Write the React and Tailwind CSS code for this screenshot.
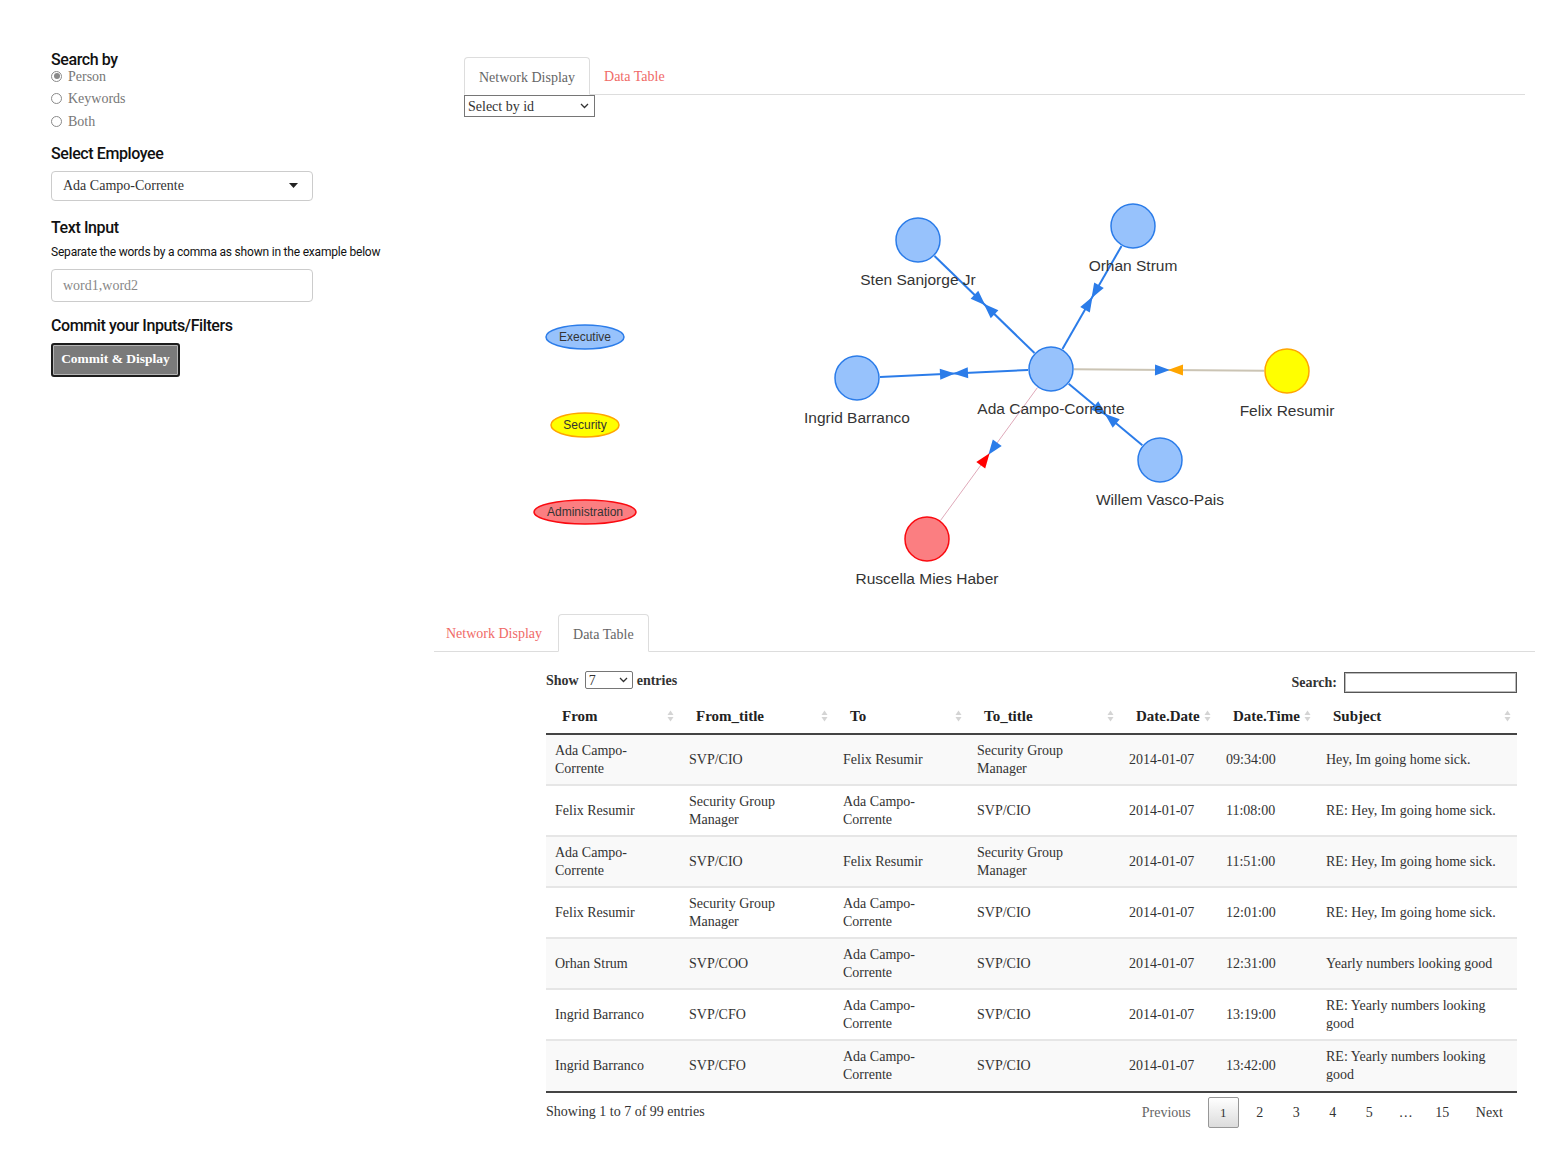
import React from 'react'

const serif = { fontFamily: '"Liberation Serif", "DejaVu Serif", serif' }
const sans = { fontFamily: 'Roboto, "Liberation Sans", sans-serif' }

const rows = [
  ['Ada Campo-Corrente', 'SVP/CIO', 'Felix Resumir', 'Security Group Manager', '2014-01-07', '09:34:00', 'Hey, Im going home sick.'],
  ['Felix Resumir', 'Security Group Manager', 'Ada Campo-Corrente', 'SVP/CIO', '2014-01-07', '11:08:00', 'RE: Hey, Im going home sick.'],
  ['Ada Campo-Corrente', 'SVP/CIO', 'Felix Resumir', 'Security Group Manager', '2014-01-07', '11:51:00', 'RE: Hey, Im going home sick.'],
  ['Felix Resumir', 'Security Group Manager', 'Ada Campo-Corrente', 'SVP/CIO', '2014-01-07', '12:01:00', 'RE: Hey, Im going home sick.'],
  ['Orhan Strum', 'SVP/COO', 'Ada Campo-Corrente', 'SVP/CIO', '2014-01-07', '12:31:00', 'Yearly numbers looking good'],
  ['Ingrid Barranco', 'SVP/CFO', 'Ada Campo-Corrente', 'SVP/CIO', '2014-01-07', '13:19:00', 'RE: Yearly numbers looking good'],
  ['Ingrid Barranco', 'SVP/CFO', 'Ada Campo-Corrente', 'SVP/CIO', '2014-01-07', '13:42:00', 'RE: Yearly numbers looking good'],
]

const cols = [
  ['From', 134], ['From_title', 154], ['To', 134], ['To_title', 152],
  ['Date.Date', 97], ['Date.Time', 100], ['Subject', 200],
]

// vis.js style palette
const BLUE = { fill: '#97c2fc', stroke: '#2b7ce9' }
const YELLOW = { fill: '#ffff00', stroke: '#ffa500' }
const RED = { fill: '#fb7e81', stroke: '#fa0a10' }

const center = { x: 1051, y: 370 }
const nodes = [
  { name: 'Sten Sanjorge Jr', x: 918, y: 241, c: BLUE, edge: '#2b7ce9', w: 2, back: '#2b7ce9' },
  { name: 'Orhan Strum', x: 1133, y: 227, c: BLUE, edge: '#2b7ce9', w: 2, back: '#2b7ce9' },
  { name: 'Ingrid Barranco', x: 857, y: 379, c: BLUE, edge: '#2b7ce9', w: 2, back: '#2b7ce9' },
  { name: 'Felix Resumir', x: 1287, y: 372, c: YELLOW, edge: '#cbc4b4', w: 2, back: '#ffa500' },
  { name: 'Willem Vasco-Pais', x: 1160, y: 461, c: BLUE, edge: '#2b7ce9', w: 2, back: '#2b7ce9' },
  { name: 'Ruscella Mies Haber', x: 927, y: 540, c: RED, edge: '#dfa9b9', w: 1, back: '#ff0000' },
]

function Arrow({ tip, dir, color }) {
  const L = 15, W = 11
  const bx = tip.x - dir.x * L, by = tip.y - dir.y * L
  const nx = -dir.y, ny = dir.x
  const pts = `${tip.x},${tip.y} ${bx + nx * W / 2},${by + ny * W / 2} ${bx - nx * W / 2},${by - ny * W / 2}`
  return <polygon points={pts} fill={color} />
}

function Edge({ n }) {
  const dx = n.x - center.x, dy = n.y - center.y
  const len = Math.hypot(dx, dy)
  const d = { x: dx / len, y: dy / len }
  const mid = { x: (n.x + center.x) / 2, y: (n.y + center.y) / 2 }
  return (
    <g>
      <line x1={center.x + d.x * 23} y1={center.y + d.y * 23} x2={n.x - d.x * 23} y2={n.y - d.y * 23} stroke={n.edge} strokeWidth={n.w} />
      <Arrow tip={{ x: mid.x + d.x, y: mid.y + d.y }} dir={d} color="#2b7ce9" />
      <Arrow tip={{ x: mid.x - d.x, y: mid.y - d.y }} dir={{ x: -d.x, y: -d.y }} color={n.back} />
    </g>
  )
}

function Node({ x, y, c, name }) {
  return (
    <g>
      <circle cx={x} cy={y} r={22} fill={c.fill} stroke={c.stroke} strokeWidth={1.5} />
      <text x={x} y={y + 45} textAnchor="middle" fontSize="15.5" fill="#343434" fontFamily='"Liberation Sans", Arial, sans-serif'>{name}</text>
    </g>
  )
}

function Network() {
  const legend = [
    { label: 'Executive', y: 338, rx: 39, c: BLUE },
    { label: 'Security', y: 426, rx: 34, c: YELLOW },
    { label: 'Administration', y: 513, rx: 51, c: RED },
  ]
  return (
    <svg width="1118" height="490" viewBox="434 118 1118 490" className="block">
      {legend.map(l => (
        <g key={l.label}>
          <ellipse cx={585} cy={l.y} rx={l.rx} ry={12} fill={l.c.fill} stroke={l.c.stroke} strokeWidth={1.5} />
          <text x={585} y={l.y + 4} textAnchor="middle" fontSize="12" fill="#343434" fontFamily='"Liberation Sans", Arial, sans-serif'>{l.label}</text>
        </g>
      ))}
      {nodes.map(n => <Edge key={n.name} n={n} />)}
      {nodes.map(n => <Node key={n.name} {...n} />)}
      <Node x={center.x} y={center.y} c={BLUE} name="Ada Campo-Corrente" />
    </svg>
  )
}

function SortIcon() {
  return (
    <svg width="7" height="12" viewBox="0 0 7 12" className="shrink-0">
      <path d="M3.5 0.5 L6.5 5 L0.5 5 Z" fill="#d4d4d4" />
      <path d="M3.5 11.5 L6.5 7 L0.5 7 Z" fill="#d4d4d4" />
    </svg>
  )
}

function Radio({ label, checked }) {
  return (
    <label className="flex items-center gap-[6px] h-[22.5px] text-[14px] text-[#777]">
      <span className="w-[11px] h-[11px] rounded-full border border-[#8a8a8a] bg-white flex items-center justify-center">
        {checked && <span className="w-[6px] h-[6px] rounded-full bg-[#8a8a8a]" />}
      </span>
      {label}
    </label>
  )
}

function Sidebar() {
  return (
    <aside className="w-[434px] shrink-0 pl-[51px] pt-[50px]">
      <h3 style={sans} className="text-[16px] leading-[20px] font-medium tracking-[-0.4px] text-[#111]">Search by</h3>
      <div style={serif} className="-mt-[5px]">
        <Radio label="Person" checked />
        <Radio label="Keywords" />
        <Radio label="Both" />
      </div>
      <h3 style={sans} className="mt-[11px] text-[16px] leading-[20px] font-medium tracking-[-0.4px] text-[#111]">Select Employee</h3>
      <div style={serif} className="mt-[7px] w-[262px] h-[30px] border border-[#ccc] rounded-[4px] flex items-center justify-between pl-[11px] pr-[14px] text-[14px] text-[#333]">
        <span>Ada Campo-Corrente</span>
        <svg width="9" height="5" viewBox="0 0 9 5"><path d="M0 0 L9 0 L4.5 5 Z" fill="#222" /></svg>
      </div>
      <h3 style={sans} className="mt-[17px] text-[16px] leading-[20px] font-medium tracking-[-0.4px] text-[#111]">Text Input</h3>
      <p style={sans} className="mt-[6px] text-[12px] leading-[16px] tracking-[-0.2px] text-[#111]">Separate the words by a comma as shown in the example below</p>
      <div style={serif} className="mt-[9px] w-[262px] h-[33px] border border-[#ccc] rounded-[4px] flex items-center pl-[11px] text-[14px] text-[#888]">word1,word2</div>
      <h3 style={sans} className="mt-[14px] text-[16px] leading-[20px] font-medium tracking-[-0.4px] text-[#111]">Commit your Inputs/Filters</h3>
      <button style={serif} className="mt-[7px] w-[129px] h-[34px] rounded-[3px] border-2 border-[#1c1c1c] bg-[#7a7a7a] shadow-[inset_0_0_0_1px_#b5b5b5] text-white text-[13.5px] font-bold">
        Commit &amp; Display
      </button>
    </aside>
  )
}

function Tabs({ active, first }) {
  return (
    <div style={serif} className="flex items-end h-[37px] border-b border-[#ddd] text-[14px]">
      {['Network Display', 'Data Table'].map((t, i) => (
        t === active ? (
          <div key={t} className={`h-[38px] -mb-px px-[14px] pt-[2px] flex items-center border border-[#ddd] border-b-white bg-white rounded-t-[4px] text-[#666] ${i > 0 ? 'ml-[2px]' : ''}`}>{t}</div>
        ) : (
          <div key={t} className={`h-[37px] pt-[2px] flex items-center text-[#f06a67] ${i > 0 ? 'pl-[14px] pr-[16px]' : first}`}>{t}</div>
        )
      ))}
    </div>
  )
}

function DataTable() {
  return (
    <div style={serif} className="ml-[112px] w-[971px] text-[#333]">
      <div className="flex items-center justify-between h-[42px] mt-[7px]">
        <div className="flex items-center gap-[4px] text-[14px] font-bold">
          Show
          <div className="ml-[2px] w-[48px] h-[18px] border border-[#767676] rounded-[2px] flex items-center justify-between pl-[3px] pr-[4px] font-normal text-[14px]">
            <span>7</span>
            <svg width="9" height="6" viewBox="0 0 9 6"><path d="M1 1 L4.5 4.5 L8 1" fill="none" stroke="#333" strokeWidth="1.3" /></svg>
          </div>
          entries
        </div>
        <div className="flex items-center gap-[7px] text-[14px] font-bold mt-[4px]">
          Search:
          <div className="w-[173px] h-[21px] border border-[#555] shadow-[inset_0_0_0_1px_#bbb]" />
        </div>
      </div>
      <table className="w-[971px] table-fixed border-collapse text-[14px] leading-[18px]">
        <colgroup>
          {cols.map(([n, w]) => <col key={n} style={{ width: w }} />)}
        </colgroup>
        <thead>
          <tr className="h-[33px] border-b-2 border-[#444]">
            {cols.map(([n]) => (
              <th key={n} className="pl-[16px] pr-[6px] pb-[2px] text-left font-bold text-[15px] text-[#222]">
                <div className="flex items-center justify-between">
                  <span>{n}</span>
                  <SortIcon />
                </div>
              </th>
            ))}
          </tr>
        </thead>
        <tbody>
          {rows.map((r, i) => (
            <tr key={i} className={`h-[51px] ${i > 0 ? 'border-t-2 border-[#e6e6e6]' : ''} ${i % 2 === 0 ? 'bg-[#f9f9f9]' : 'bg-white'}`}>
              {r.map((c, j) => (
                <td key={j} className="pl-[9px] pr-[10px] align-middle">{c}</td>
              ))}
            </tr>
          ))}
        </tbody>
      </table>
      <div className="border-t-2 border-[#444] flex items-start justify-between pt-[4px] text-[14px]">
        <div className="pt-[4px]">Showing 1 to 7 of 99 entries</div>
        <div className="flex items-center text-[#333] mr-[14px]">
          <span className="text-[#666] mr-[17px]">Previous</span>
          <span className="w-[31px] h-[31px] flex items-center justify-center border border-[#979797] rounded-[2px] bg-gradient-to-b from-white to-[#dcdcdc] text-[13px]">1</span>
          {['2', '3', '4', '5', '…', '15'].map(p => (
            <span key={p} className="w-[31px] h-[31px] ml-[5.5px] flex items-center justify-center">{p}</span>
          ))}
          <span className="ml-[18px]">Next</span>
        </div>
      </div>
    </div>
  )
}

export default function App() {
  return (
    <div className="w-[1552px] min-h-[1160px] bg-white flex">
      <Sidebar />
      <main className="flex-1">
        <div className="ml-[30px] mr-[27px] mt-[58px]">
          <Tabs active="Network Display" first="px-[16px]" />
          <div style={serif} className="w-[131px] h-[22px] border border-[#767676] flex items-center justify-between pl-[3px] pr-[5px] text-[14px] text-[#333]">
            <span>Select by id</span>
            <svg width="9" height="6" viewBox="0 0 9 6"><path d="M1 1 L4.5 4.5 L8 1" fill="none" stroke="#333" strokeWidth="1.3" /></svg>
          </div>
        </div>
        <Network />
        <div className="mr-[17px] mt-[8px]">
          <Tabs active="Data Table" first="pl-[12px] pr-[14px]" />
          <DataTable />
        </div>
      </main>
    </div>
  )
}
